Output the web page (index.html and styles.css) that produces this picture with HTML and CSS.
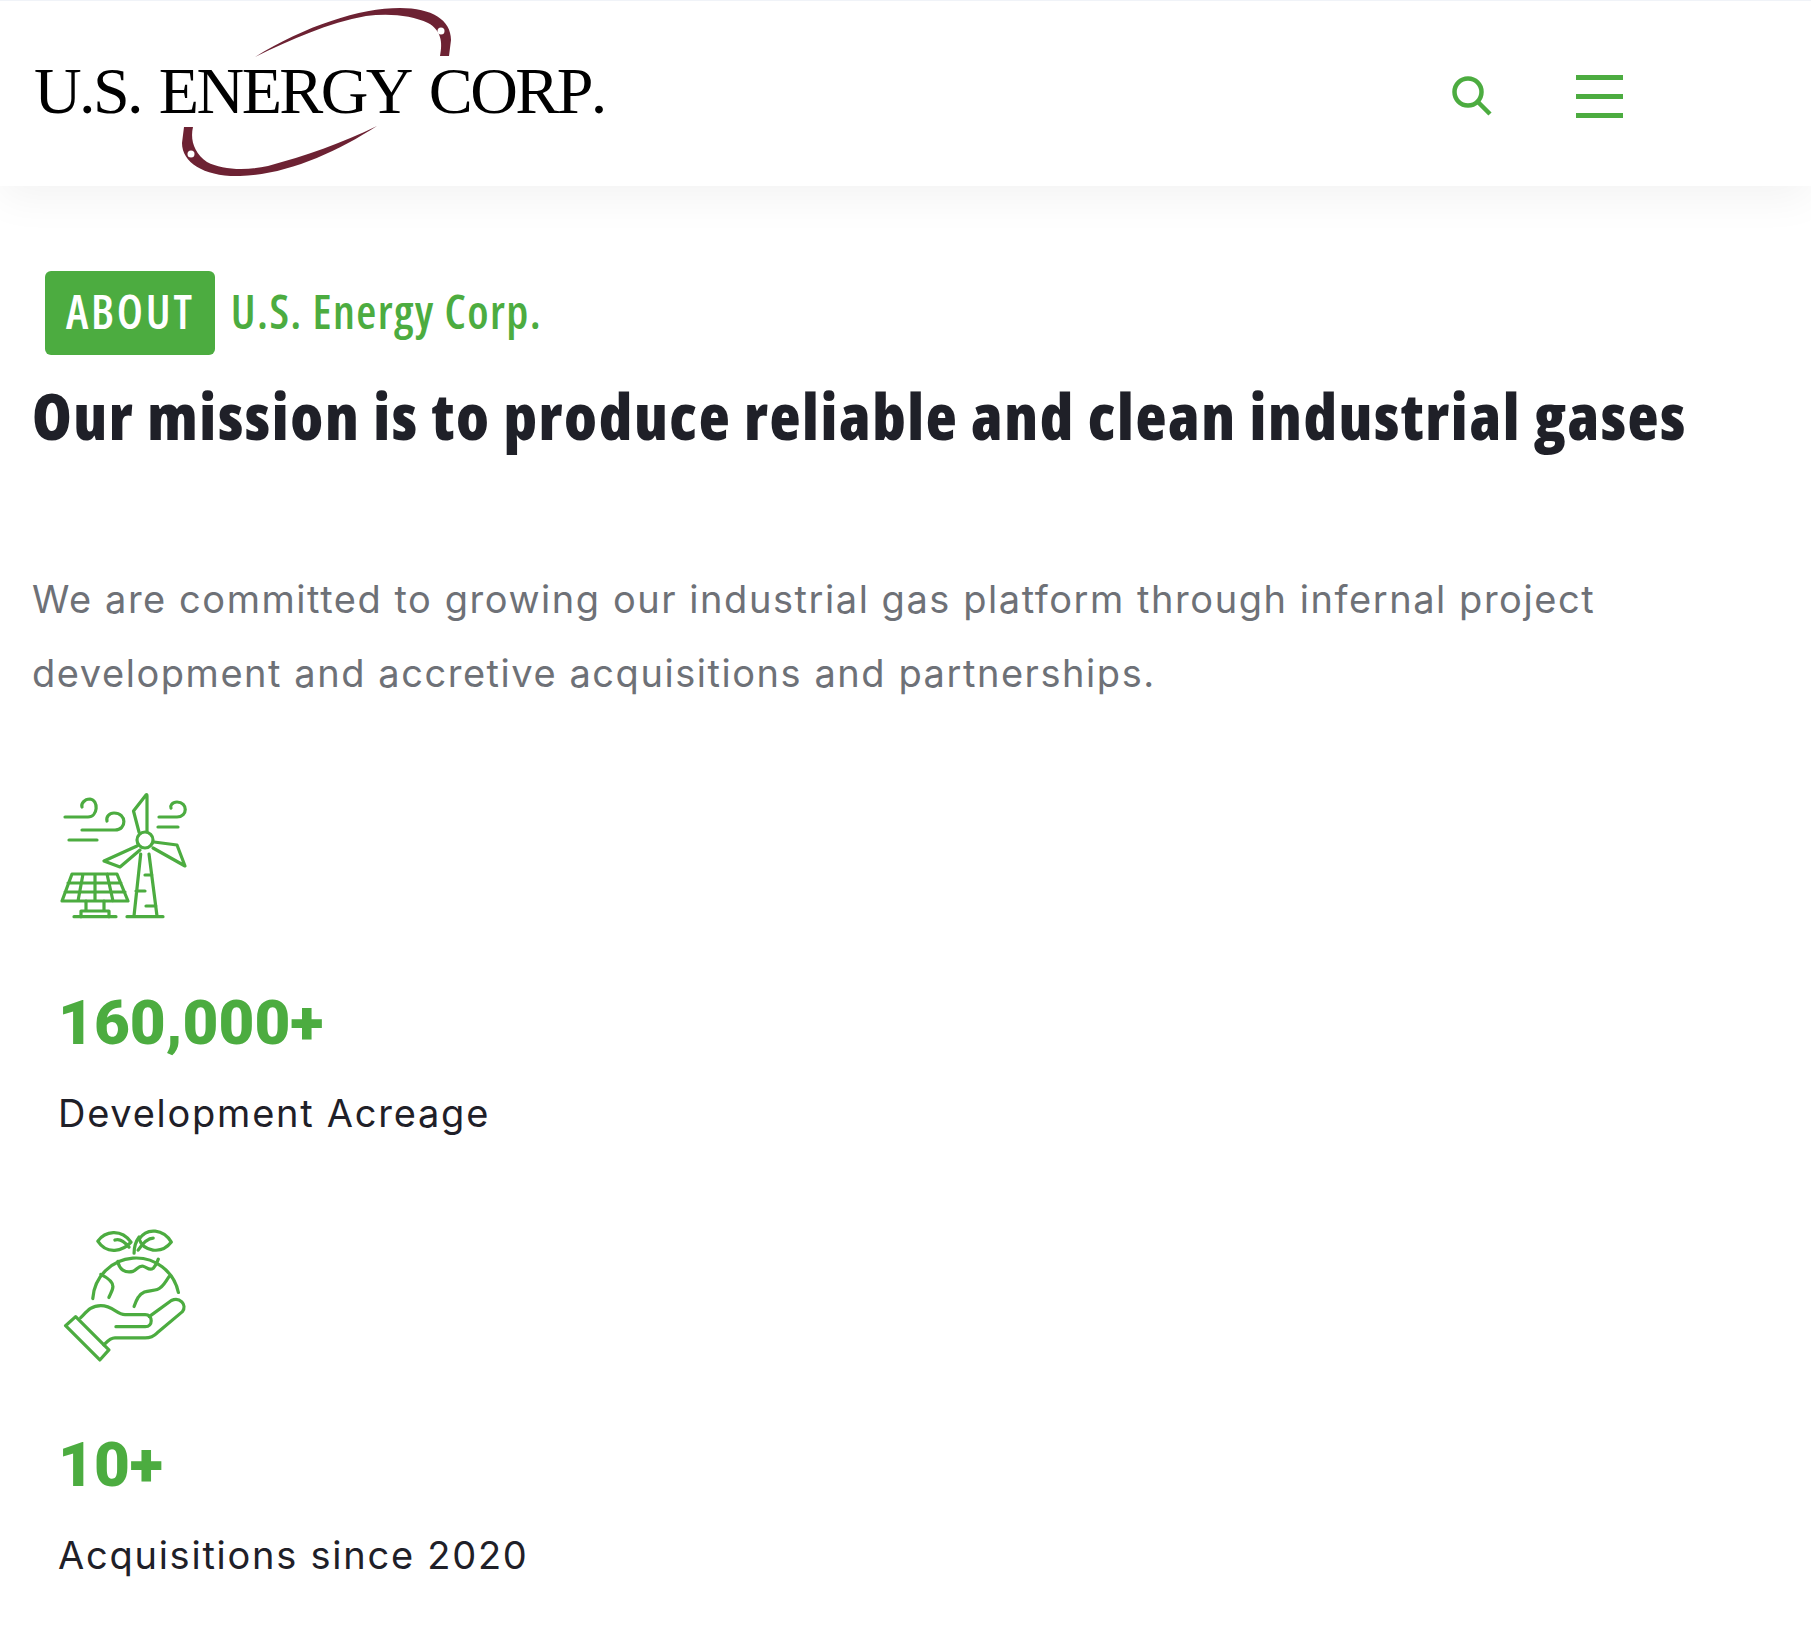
FILE: index.html
```html
<!DOCTYPE html>
<html lang="en">
<head>
<meta charset="UTF-8">
<title>About - U.S. Energy Corp.</title>
<link rel="stylesheet" href="styles.css">
</head>
<body>
<header class="site-header">
  <a class="logo" href="#">
    <svg class="logo-swoosh" viewBox="0 0 640 186" aria-hidden="true">
      <path d="M255,59 C305,28 360,10 400,10 C432,10 451,22 451,42 L449,58 L440,58 C443,44 441,32 428,25 C412,17 388,15 366,18 C328,25 292,41 255,59Z"/>
      <path d="M377,128 C335,155 285,177 240,178 C205,179 182,165 182,145 L184,129 L193,129 C190,142 194,155 207,164 C222,172 246,173 268,168 C305,158 342,145 377,128Z"/>
      <circle class="rivet" cx="441" cy="33" r="3.5"/>
      <circle class="rivet" cx="191" cy="156" r="3.5"/>
    </svg>
    <span class="logo-text">U.S. ENERGY CORP.</span>
  </a>
  <div class="header-tools">
    <svg class="search-icon" viewBox="0 0 40 40" aria-label="Search">
      <circle cx="16" cy="16" r="13.5"/>
      <path d="M26 26 L38 38"/>
    </svg>
    <div class="menu-icon" aria-label="Menu"><span></span><span></span><span></span></div>
  </div>
</header>

<main class="about">
  <p class="eyebrow"><span class="badge">ABOUT</span><span class="eyebrow-name">U.S. Energy Corp.</span></p>
  <h1>Our mission is to produce reliable and clean industrial gases</h1>
  <p class="lead">We are committed to growing our industrial gas platform through infernal project development and accretive acquisitions and partnerships.</p>

  <div class="stats">
    <div class="stat">
      <svg class="stat-icon" viewBox="30 20 128 128" aria-hidden="true">
        <circle cx="115" cy="69" r="8"/>
        <path d="M109,61 L103.5,40 L116,24 Q117,23 117,25 V60"/>
        <path d="M124,71 L147,74 L155,95 L123,77"/>
        <path d="M107,75 L74,90 L90,96 L110,79"/>
        <path d="M110.7,83 L104,145 M119,83 L127,145 M97,145.7 H133 M115,104 H122 M106,120 H115 M116,135 H126"/>
        <path d="M35,46 H58 C68,46 69,29 60,28 C54,28 51,33 52,36"/>
        <path d="M52,59 H85 C97,59 97,42 84,42 C79,42 76,46 77,50"/>
        <path d="M39,69 H67"/>
        <path d="M129,46 H147 C158,46 158,31 147,31 C142,31 140,35 141,37"/>
        <path d="M128,56 H148"/>
        <path d="M42,103 H87 L98,130 H32Z M38,112 H91 M35,121 H95 M53,103 L48,130 M65,103 V130 M77,103 L83,130"/>
        <path d="M56,130 V140 M74,130 V140 M51,146 V140 H79 V146 M44,145.7 H86"/>
      </svg>
      <div class="stat-num">160,000+</div>
      <div class="stat-label">Development Acreage</div>
    </div>
    <div class="stat">
      <svg class="stat-icon stat-icon-globe" viewBox="21 19 124 133" aria-hidden="true">
        <path d="M57,32 C64,22 80,19 90,33 C82,42 66,46 57,32Z M74,31 C79,29 83,32 88,38"/>
        <path d="M130,33 C122,20 106,18 98,30 C102,42 120,46 130,33Z M112,29 C107,29 101,35 97,41"/>
        <path d="M93,44 C93,38 95,32 98,28"/>
        <path d="M52,89 A43,43 0 0 1 137,83"/>
        <path d="M77,52 C78,60 84,64 92,62 C96,60 98,56 102,57 C106,58 108,62 112,59 C115,56 116,52 117,50"/>
        <path d="M60,65 C66,68 72,72 72,77 C72,81 69,85 68,88"/>
        <path d="M128,67 C124,72 122,78 116,80 C110,82 102,80 97,88 C95,91 94,94 93,97"/>
        <path d="M35,107 L25,116 L59,150 L68,140Z"/>
        <path d="M40,108 C46,102 50,96 60,96 C72,96 76,105 84,105 H104 C112,105 112,117 104,117 H75"/>
        <path d="M108,107 L130,91 C138,87 146,95 141,102 L116,123 C112,127 109,128 104,128 H74 C69,128 66,132 63,135"/>
      </svg>
      <div class="stat-num">10+</div>
      <div class="stat-label">Acquisitions since 2020</div>
    </div>
  </div>
</main>
</body>
</html>
```

FILE: styles.css
```css
/* ---------- GLOBAL ---------- */
html,body{margin:0;padding:0;background:#fff;color:#1f2028;font-family:"Inter",sans-serif;}
a{color:inherit;text-decoration:none;}

/* ---------- HEADER ---------- */
.site-header{height:185px;border-top:1px solid #f0f3f8;display:flex;align-items:center;justify-content:space-between;padding:0 188px 0 34px;box-shadow:0 12px 40px rgba(0,0,0,.05);}
.logo{position:relative;display:block;margin-top:-5px;}
.logo-text{font-family:"Liberation Serif",serif;font-size:66px;font-kerning:none;letter-spacing:-2.6px;word-spacing:4px;line-height:1;color:#000;display:block;white-space:nowrap;position:relative;}
.logo-swoosh{position:absolute;left:-34px;top:-60px;width:640px;height:186px;fill:#6d2233;}
.logo-swoosh .rivet{fill:#fff;}
.header-tools{display:flex;align-items:center;gap:84px;margin-top:5px;}
.search-icon{width:40px;height:40px;fill:none;stroke:#4cac40;stroke-width:4.5;}
.menu-icon{width:47px;display:flex;flex-direction:column;gap:14px;}
.menu-icon span{display:block;height:5px;background:#4cac40;}

/* ---------- ABOUT ---------- */
.about{padding:85px 32px 0;}
.eyebrow{display:flex;align-items:flex-start;gap:16px;margin:0 0 0 13px;font-family:"Open Sans",sans-serif;font-stretch:75%;font-weight:600;font-size:46px;letter-spacing:1.4px;line-height:80px;}
.badge{background:#4cac40;color:#fff;border-radius:6px;padding:0 20px 4px 21px;letter-spacing:2.8px;}
.eyebrow-name{color:#4cac40;}
h1{margin:16px 0 0;font-family:"Open Sans",sans-serif;font-stretch:75%;font-weight:800;font-size:64px;letter-spacing:1.6px;line-height:90px;color:#1f2028;white-space:nowrap;}
.lead{margin:101px 0 0;max-width:1600px;font-size:38px;letter-spacing:1.55px;line-height:74px;color:#6e7177;}

.stats{margin:80px 0 0 26px;display:flex;flex-direction:column;gap:85px;}
.stat-icon{display:block;width:128px;height:130px;margin-left:2px;fill:none;stroke:#4cac40;stroke-width:3.2;stroke-linecap:round;stroke-linejoin:round;}
.stat-icon-globe{height:134px;}
.stat-num{margin-top:63px;font-family:"Roboto",sans-serif;font-weight:900;font-size:62px;line-height:80px;color:#4cac40;}
.stat-label{margin-top:20px;font-size:38px;letter-spacing:1.75px;line-height:60px;color:#1f2028;}
```
